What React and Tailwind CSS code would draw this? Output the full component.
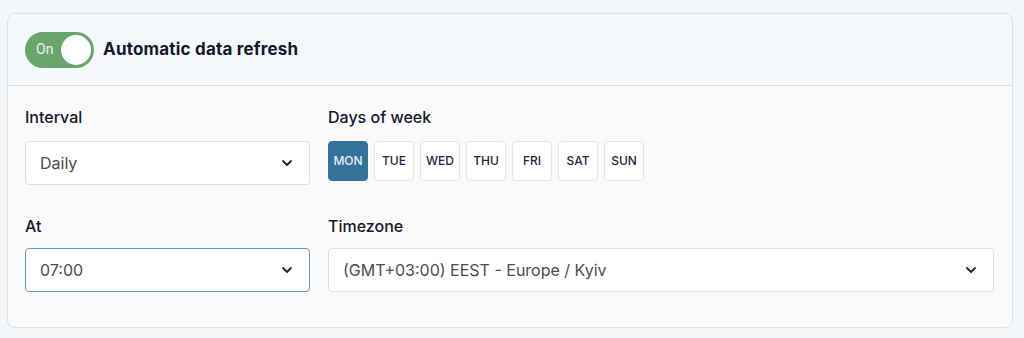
import React from "react";

function Chevron() {
  return (
    <svg width="12" height="8" viewBox="0 0 12 8" fill="none" className="shrink-0">
      <path d="M2 2l4 4 4-4" stroke="#1f2433" strokeWidth="1.8" strokeLinecap="round" strokeLinejoin="round" />
    </svg>
  );
}

function Select({ value, focused, className = "" }) {
  return (
    <div
      className={`flex h-[44px] items-center justify-between rounded-[4px] border bg-white pl-[14px] pr-[16px] ${
        focused ? "border-[#6a96b6]" : "border-[#dcdfe3]"
      } ${className}`}
    >
      <span className="text-[16px] text-[#4a4d55]">{value}</span>
      <Chevron />
    </div>
  );
}

export default function App() {
  const days = ["MON", "TUE", "WED", "THU", "FRI", "SAT", "SUN"];
  return (
    <div
      className="h-[338px] w-[1024px] bg-[#f4f7f9] pl-[7px] pr-[11px] pt-[13px]"
      style={{ fontFamily: "Inter, Roboto, 'Noto Sans', sans-serif" }}
    >
      <div className="overflow-hidden rounded-[8px] border border-[#dde1e5] bg-[#fafafa]">
        <div className="flex h-[72px] items-center gap-[9px] border-b border-[#dde1e5] bg-[#f5f8fa] px-[17px]">
          <div className="flex h-[36px] w-[69px] items-center justify-between rounded-full bg-[#6aa56c] pl-[11px] pr-[3px]">
            <span className="text-[14px] text-[#eef6ee]" style={{ fontFamily: "Roboto, sans-serif" }}>On</span>
            <span className="h-[30px] w-[30px] rounded-full bg-white"></span>
          </div>
          <span className="text-[17px] font-bold tracking-[0.2px] text-[#15172b]">Automatic data refresh</span>
        </div>
        <div className="grid grid-cols-[285px_1fr] gap-x-[18px] gap-y-[30px] pb-[35px] pl-[17px] pr-[18px] pt-[20px]">
          <div>
            <div className="mb-[13px] h-[22px] text-[16px] font-medium leading-[22px] text-[#15172b]">Interval</div>
            <Select value="Daily" />
          </div>
          <div>
            <div className="mb-[13px] h-[22px] text-[16px] font-medium leading-[22px] text-[#15172b]">Days of week</div>
            <div className="flex gap-[6px]">
              {days.map((d, i) => (
                <div
                  key={d}
                  className={`flex h-[40px] w-[40px] items-center justify-center rounded-[4px] border text-[12px] font-medium ${
                    i === 0
                      ? "border-[#35729a] bg-[#35729a] text-[#e8f0f5]"
                      : "border-[#e3e5e8] bg-white text-[#23263a]"
                  }`}
                >
                  {d}
                </div>
              ))}
            </div>
          </div>
          <div>
            <div className="mb-[11px] h-[22px] text-[16px] font-medium leading-[22px] text-[#15172b]">At</div>
            <Select value="07:00" focused />
          </div>
          <div>
            <div className="mb-[11px] h-[22px] text-[16px] font-medium leading-[22px] text-[#15172b]">Timezone</div>
            <Select value="(GMT+03:00) EEST - Europe / Kyiv" />
          </div>
        </div>
      </div>
    </div>
  );
}
